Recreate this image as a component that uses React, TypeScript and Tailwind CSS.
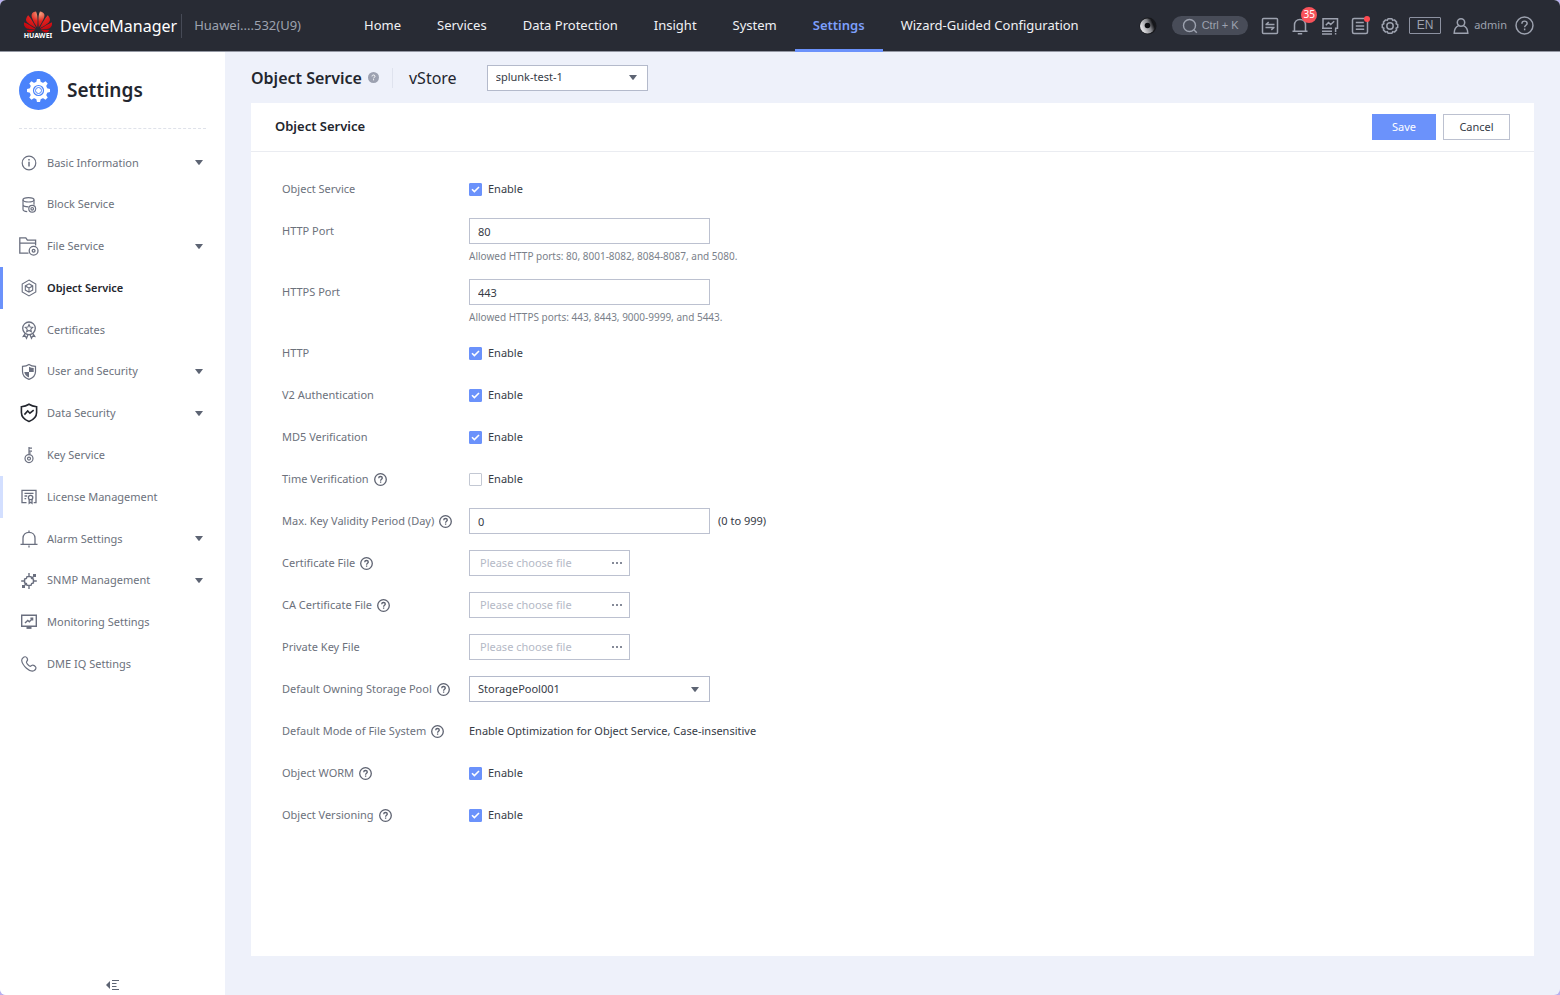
import React, { useId } from 'react'
import { SiHuawei } from 'react-icons/si'

const Svg: React.FC<{ size?: number; width?: number; className?: string; children: React.ReactNode }> = ({
    size = 20,
    width = 1.2,
    className = '',
    children,
}) => (
    <svg
        width={size}
        height={size}
        viewBox={`0 0 ${size} ${size}`}
        fill="none"
        stroke="currentColor"
        strokeWidth={width}
        className={`shrink-0 ${className}`}
        aria-hidden="true"
    >
        {children}
    </svg>
)

/* ---------- sidebar icons ---------- */

const InfoIcon = () => (
    <Svg>
        <circle cx="10" cy="10" r="6.8" />
        <path d="M10 8.8v4.7M10 6v1.4" strokeWidth="1.5" />
    </Svg>
)

const BlockIcon = () => (
    <Svg>
        <ellipse cx="9.5" cy="4.8" rx="5.5" ry="2.2" />
        <path d="M4 4.8v9.4c0 1.3 1.8 2.2 4.2 2.4M15 4.8v5M4 9.6c0 1.3 2.4 2.3 5.500 2.3" />
        <circle cx="13.2" cy="13.8" r="3.4" />
        <circle cx="13.2" cy="13.8" r="1.3" />
    </Svg>
)

const FolderIcon = () => (
    <Svg width={1.3}>
        <path d="M9.5 17.2H.8V1.8h6l1.6 2.4h8.2v5.4M.8 7.2h15.8" />
        <circle cx="14.6" cy="14.8" r="4.4" />
        <circle cx="14.6" cy="14.8" r="1.4" />
    </Svg>
)

const ObjectIcon = () => (
    <Svg width={1.1}>
        <path d="M10 2.1l6.8 3.9v8L10 17.9 3.200 14V6z" />
        <path d="M10 5.800l3.700 2.100v4.200L10 14.200l-3.700-2.100V7.900zM6.300 7.900L10 10l3.700-2.100M10 10v4.200" />
    </Svg>
)

const CertificateIcon = () => (
    <Svg width={1.3}>
        <circle cx="10" cy="8.3" r="6.3" />
        <path d="M10 4.6l1.1 2.4 2.6.3-1.9 1.8.5 2.6L10 10.4l-2.3 1.3.5-2.6-1.900-1.800 2.600-.3z" strokeWidth="1.1" />
        <path d="M6.3 13.4l-2 3 2.2-.2 1 2 1.500-3.400M13.700 13.400l2 3-2.200-.2-1 2-1.500-3.400" />
    </Svg>
)

const ShieldUserIcon = () => (
    <Svg>
        <path d="M10 2.4c2 1.3 4 1.800 6.500 2v5c0 3.900-2.600 6.500-6.500 8-3.900-1.500-6.500-4.100-6.500-8v-5c2.500-.2 4.500-.7 6.500-2z" />
        <path d="M10 4.700c1.500.8 3 1.200 4.700 1.400V10H10zM10 10v5.500c-2.700-1.200-4.400-3-4.700-5.500z" fill="currentColor" stroke="none" />
    </Svg>
)

const ShieldDataIcon = () => (
    <Svg width={1.6} className="text-[#23262e]">
        <path d="M10 1.3c2.3 1.4 4.8 2.1 7.6 2.400v5.800c0 4.200-3 7.200-7.600 9-4.600-1.800-7.600-4.800-7.600-9V3.700c2.800-.3 5.300-1 7.600-2.400z" />
        <path d="M5.400 11.600L8.700 8l2.200 2.200 3.800-3" />
    </Svg>
)

const KeyIcon = () => (
    <Svg>
        <circle cx="10" cy="13.6" r="4" />
        <circle cx="10" cy="13.6" r="1.5" />
        <path d="M10 9.600V2M10 3.200h3M10 6.200h3M10 8h2" />
    </Svg>
)

const LicenseIcon = () => (
    <Svg width={1.3}>
        <path d="M7.500 15.600H3V3.400h14v12.200h-2.300M5.500 6.400h9M5.500 9h2.700M5.500 11.600h1.700" />
        <circle cx="11.600" cy="10.500" r="2.200" />
        <path d="M10.200 12.400v3.800l1.400-.9 1.400.9v-3.800" />
    </Svg>
)

const AlarmIcon = () => (
    <Svg width={1.3}>
        <path d="M1.500 15.300h17M4 15.300V9.200C4 5.600 6.600 3.300 10 3.300s6 2.300 6 5.900v6.100M10 3.300V1.500M10 16.600v2" />
    </Svg>
)

const SnmpIcon = () => (
    <Svg width={1.4}>
        <path d="M8 5.600h4l.6 1.800 1.800.6v4l-1.800.6-.6 1.800H8l-.6-1.800-1.800-.6V8l1.800-.6z" />
        <path d="M10 2v3.600M10 14.400V18M2.200 10h3.400M14.400 10h3.400M12.600 7.400l2.400-2.400M7.400 12.600L5 15" />
        <path d="M14 3h3v3h-3zM3 14h3v3H3z" fill="currentColor" stroke="none" />
    </Svg>
)

const MonitorIcon = () => (
    <Svg width={1.4}>
        <path d="M2.700 3.300h14.600v10.900H2.700z" />
        <path d="M6 11l2.800-2.600 1.500 1.300 2.900-2.900M11.400 6.200h2.200v2.200" />
        <path d="M7.500 15h5v1.900h-5z" fill="currentColor" stroke="none" />
    </Svg>
)

const PhoneIcon = () => (
    <Svg>
        <path d="M4.300 3.400c1.300-1 2.800-.9 3.600.4.800 1.300 1 2.700-.2 3.700-.6.600-.4 1.200.5 2.300s1.900 2.200 2.700 2.500c.9.300 1.300-.8 2.200-1.100 1.300-.4 2.600.4 3.500 1.700.8 1.100.2 2.700-1.400 3.700-1.700 1-4.700.3-7.700-2.400S2.900 8.500 2.700 6.500c-.1-1.300.5-2.300 1.600-3.100z" />
    </Svg>
)

const Caret: React.FC<{ className?: string }> = ({ className = '' }) => (
    <svg width="8" height="5" viewBox="0 0 8 5" fill="currentColor" className={`shrink-0 text-[#5d6473] ${className}`} aria-hidden="true">
        <path d="M0 0h8L4.600 4.600a.8.800 0 0 1-1.200 0z" />
    </svg>
)

const HelpIcon: React.FC<{ size?: number; className?: string }> = ({ size = 13, className = '' }) => (
    <svg
        width={size}
        height={size}
        viewBox="0 0 13 13"
        fill="none"
        stroke="currentColor"
        strokeWidth={size > 13 ? 1 : 1.3}
        className={`shrink-0 ${className}`}
        aria-hidden="true"
    >
        <circle cx="6.5" cy="6.5" r="5.8" />
        <path d="M4.7 5.3c0-1.1.8-1.8 1.800-1.800s1.800.7 1.800 1.600c0 1.200-1.700 1.300-1.700 2.600M6.600 8.600v1.200" />
    </svg>
)

/* ---------- header icons ---------- */

const TransferIcon = () => (
    <Svg size={18} width={1.5}>
        <rect x="1.5" y="1.5" width="15" height="15" rx="1" />
        <path d="M4.500 7.600h9M4.700 7.800l3-2.700M13.500 10.400h-9M13.300 10.200l-3 2.700" />
    </Svg>
)

const BellIcon = () => (
    <Svg size={18} width={1.5}>
        <path d="M1.500 14.300h15M3.500 14V8c0-3.300 2.300-5.500 5.500-5.500s5.500 2.200 5.500 5.500v6M6.800 16.700h4.400" />
    </Svg>
)

const ChartIcon = () => (
    <Svg size={18} width={1.5}>
        <path d="M2 11.200V1.800h14.500v9.400h-2.600M1 11.200h10M4.800 8.200l2.700-2.700 2.200 2 3.500-3.300M1 14.200h10M1 17h10M14.600 12v3M14.600 16v1.500" />
    </Svg>
)

const ListIcon = () => (
    <Svg size={18} width={1.5}>
        <rect x="1.5" y="1.5" width="15" height="15" rx="1.5" />
        <path d="M4.800 5.600h8M4.800 9h8.400M4.800 12.300h8.400" />
    </Svg>
)

const CogIcon = () => (
    <Svg size={18} width={1.5}>
        <path
            d="M7 1.800h4l.7 1.600 1.700-.5 2.200 2.200-.5 1.700 1.600.7v3l-1.600.7.5 1.700-2.200 2.200-1.700-.5-.7 1.600H7l-.7-1.600-1.700.5-2.200-2.200.5-1.700-1.600-.7v-3l1.600-.7-.5-1.700 2.200-2.200 1.700.5z"
            strokeLinejoin="round"
        />
        <circle cx="9" cy="9" r="3.2" />
    </Svg>
)

const UserIcon = () => (
    <Svg size={18} width={1.5}>
        <circle cx="9" cy="5.5" r="3.7" />
        <path d="M6.700 8.600C3.600 9.800 2.200 12.200 2.200 16.200h13.600c0-4-1.400-6.400-4.500-7.600" />
    </Svg>
)

const SearchIcon = () => (
    <Svg size={16} width={1.4}>
        <circle cx="7.5" cy="7.5" r="6" />
        <path d="M11.800 11.800l3 3" />
    </Svg>
)

const StatusRing = () => (
    <svg width="18" height="18" viewBox="0 0 18 18" aria-hidden="true">
        <defs>
            <linearGradient id="ring" x1="0.1" y1="0.8" x2="1" y2="0.4">
                <stop offset="0.1" stopColor="#dddde0" />
                <stop offset="0.6" stopColor="#85868b" />
                <stop offset="0.9" stopColor="#15161a" />
            </linearGradient>
        </defs>
        <circle cx="9" cy="9" r="8.5" fill="#17181c" />
        <circle cx="8.5" cy="9" r="7.5" fill="url(#ring)" />
        <circle cx="8.5" cy="8.5" r="2.8" fill="#0b0c10" />
    </svg>
)

const GearBadge = () => (
    <svg width="39" height="39" viewBox="0 0 39 39" aria-hidden="true">
        <circle cx="19.5" cy="19.5" r="19.5" fill="#4a83fb" />
        {[0, 45, 90, 135, 180, 225, 270, 315].map((a) => (
            <path key={a} d="M17 12l1-4h3l1 4z" fill="#fff" transform={`rotate(${a} 19.5 19.5)`} />
        ))}
        <circle cx="19.5" cy="19.5" r="9" fill="#fff" />
        <circle cx="19.5" cy="19.5" r="5" fill="none" stroke="#4a83fb" strokeWidth="1.2" />
        <circle cx="19.5" cy="19.5" r="3" fill="none" stroke="#4a83fb" strokeWidth="1" />
    </svg>
)

const Logo = () => (
    <div className="flex w-7 flex-col items-center">
        <svg width="0" height="0" className="absolute" aria-hidden="true">
            <defs>
                <radialGradient id="petal" cx="0.55" cy="0.1" r="0.8">
                    <stop offset="0" stopColor="#f5a883" />
                    <stop offset="0.45" stopColor="#e2231f" />
                    <stop offset="1" stopColor="#c4060f" />
                </radialGradient>
            </defs>
        </svg>
        <SiHuawei size={28} fill="url(#petal)" stroke="none" className="-my-1" aria-hidden="true" />
        <span className="text-[7px] leading-[7px] font-bold text-white">HUAWEI</span>
    </div>
)

/* ---------- data ---------- */

const navItems = ['Home', 'Services', 'Data Protection', 'Insight', 'System', 'Settings', 'Wizard-Guided Configuration']

const menu = [
    { label: 'Basic Information', icon: <InfoIcon />, expandable: true },
    { label: 'Block Service', icon: <BlockIcon /> },
    { label: 'File Service', icon: <FolderIcon />, expandable: true },
    { label: 'Object Service', icon: <ObjectIcon />, active: true },
    { label: 'Certificates', icon: <CertificateIcon /> },
    { label: 'User and Security', icon: <ShieldUserIcon />, expandable: true },
    { label: 'Data Security', icon: <ShieldDataIcon />, expandable: true },
    { label: 'Key Service', icon: <KeyIcon /> },
    { label: 'License Management', icon: <LicenseIcon />, hovered: true },
    { label: 'Alarm Settings', icon: <AlarmIcon />, expandable: true },
    { label: 'SNMP Management', icon: <SnmpIcon />, expandable: true },
    { label: 'Monitoring Settings', icon: <MonitorIcon /> },
    { label: 'DME IQ Settings', icon: <PhoneIcon /> },
]

/* ---------- form pieces ---------- */

const Row: React.FC<{ label: string; htmlFor?: string; help?: boolean; hint?: string; children: React.ReactNode }> = ({
    label,
    htmlFor,
    help,
    hint,
    children,
}) => (
    <div className={hint ? 'h-[61px]' : 'h-[42px]'}>
        <div className="flex h-[42px] items-center">
            <div className="flex w-[187px] shrink-0 items-center gap-[5px] text-[#6c717c]">
                {htmlFor ? <label htmlFor={htmlFor}>{label}</label> : <span>{label}</span>}
                {help && <HelpIcon className="text-[#5d6270]" />}
            </div>
            {children}
        </div>
        {hint && <p className="-mt-1 ml-[187px] text-[10px] leading-4 text-[#7a7f8a]">{hint}</p>}
    </div>
)

const CheckRow: React.FC<{ label: string; help?: boolean; defaultChecked?: boolean }> = ({ label, help, defaultChecked = true }) => {
    const id = useId()
    return (
        <Row label={label} help={help}>
            <span className="grid place-items-center">
                <input
                    id={id}
                    type="checkbox"
                    aria-label={label}
                    defaultChecked={defaultChecked}
                    className="peer col-start-1 row-start-1 size-[13px] appearance-none rounded-[1px] border border-[#c3c8d3] bg-white checked:border-[#6b92fb] checked:bg-[#6b92fb]"
                />
                <svg width="9" height="7" viewBox="0 0 9 7" className="pointer-events-none invisible col-start-1 row-start-1 peer-checked:visible" aria-hidden="true">
                    <path d="M1 3.2l2.400 2.400L8 1" fill="none" stroke="#fff" strokeWidth="1.6" />
                </svg>
            </span>
            <label htmlFor={id} className="ml-1.5 text-[#363b46]">
                Enable
            </label>
        </Row>
    )
}

const TextRow: React.FC<{ label: string; value: string; help?: boolean; hint?: string; suffix?: string }> = ({ label, value, help, hint, suffix }) => {
    const id = useId()
    return (
        <Row label={label} htmlFor={id} help={help} hint={hint}>
            <input id={id} type="text" defaultValue={value} className="h-[26px] w-[241px] border border-[#bcc1d0] bg-white px-2 text-[#363b46] outline-none" />
            {suffix && <span className="ml-2 text-[#363b46]">{suffix}</span>}
        </Row>
    )
}

const FileRow: React.FC<{ label: string; help?: boolean }> = ({ label, help }) => {
    const id = useId()
    return (
        <Row label={label} htmlFor={id} help={help}>
            <div className="flex h-[26px] w-[161px] items-center border border-[#bcc1d0] bg-white">
                <input id={id} type="text" readOnly placeholder="Please choose file" className="min-w-0 flex-1 pl-2.5 outline-none placeholder:text-[#b4b9c6]" />
                <button type="button" aria-label={`Browse ${label}`} className="flex h-full w-6 items-center justify-center">
                    <svg width="10" height="2" viewBox="0 0 10 2" fill="#858a98" aria-hidden="true">
                        <path d="M0 0h2v2H0zM4 0h2v2H4zM8 0h2v2H8z" />
                    </svg>
                </button>
            </div>
        </Row>
    )
}

const Select: React.FC<{ id: string; value: string; className: string }> = ({ id, value, className }) => (
    <div className={`grid h-[26px] items-center ${className}`}>
        <select id={id} defaultValue={value} className="col-start-1 row-start-1 h-full w-full appearance-none border border-[#b4bacb] bg-white px-2 text-[#363b46] outline-none">
            <option>{value}</option>
        </select>
        <Caret className="pointer-events-none col-start-1 row-start-1 mr-[11px] justify-self-end" />
    </div>
)

/* ---------- layout ---------- */

const Header = () => (
    <header className="flex h-[52px] items-center border-b border-[#9498a3] bg-[#282b34] pr-[26px] pl-6 text-[#9da2af]">
        <Logo />
        <span className="ml-2 text-[16px] text-white">DeviceManager</span>
        <span className="ml-1 h-6 w-px bg-[#464a56]" />
        <span className="ml-3 text-[13px]">Huawei....532(U9)</span>
        <nav className="ml-[45px] flex h-full text-[13px] whitespace-nowrap">
            {navItems.map((item) => (
                <a
                    key={item}
                    href="#"
                    className={`-mb-px flex items-center border-y-[3px] border-t-transparent px-[18px] ${
                        item === 'Settings' ? 'border-b-[#6b92fb] font-semibold text-[#7d9ffb]' : 'border-b-transparent text-[#f0f1f4]'
                    }`}
                >
                    {item}
                </a>
            ))}
        </nav>
        <div className="ml-auto flex items-center">
            <StatusRing />
            <button type="button" className="ml-[15px] flex h-[19px] w-[76px] items-center justify-center gap-1 rounded-full bg-[#484c58] font-['Liberation_Sans',sans-serif] text-[11px]">
                <SearchIcon />
                <span>Ctrl + K</span>
            </button>
            <div className="ml-[13px] flex gap-3">
                <button type="button" aria-label="Transfers">
                    <TransferIcon />
                </button>
                <button type="button" aria-label="Alarms" className="relative">
                    <BellIcon />
                    <span className="absolute -top-[10px] left-[10px] flex size-4 items-center justify-center rounded-full bg-[#f8525a] text-[10px] text-white">35</span>
                </button>
                <button type="button" aria-label="Monitoring">
                    <ChartIcon />
                </button>
                <button type="button" aria-label="Tasks" className="relative">
                    <ListIcon />
                    <span className="absolute -top-px -right-px size-[6px] rounded-full bg-[#ff4a50]" />
                </button>
                <button type="button" aria-label="Preferences">
                    <CogIcon />
                </button>
            </div>
            <button type="button" className="ml-[10px] h-[17px] w-8 rounded-[1px] border border-[#8d92a1] font-['Liberation_Sans',sans-serif] text-[12px] leading-[15px]">
                EN
            </button>
            <button type="button" className="ml-[11px] flex items-center gap-1 text-[11px]">
                <UserIcon />
                admin
            </button>
            <button type="button" aria-label="Help" className="ml-2">
                <HelpIcon size={19} />
            </button>
        </div>
    </header>
)

const Sidebar = () => (
    <aside className="flex w-[225px] shrink-0 flex-col bg-white">
        <div className="mx-[19px] flex h-[77px] items-center gap-[9px] border-b border-dashed border-[#dfe2ea] text-[19px] font-semibold text-[#23262e]">
            <GearBadge />
            Settings
        </div>
        <nav className="mt-[13px] grid h-[543px] auto-rows-fr text-[11px]">
            {menu.map(({ label, icon, expandable, active, hovered }) => (
                <a
                    key={label}
                    href="#"
                    className={`flex items-center border-l-[3px] pr-[22px] pl-4 ${
                        active ? 'border-[#6b92fb] font-semibold text-[#23262e]' : hovered ? 'border-[#d3dfff] text-[#6c717c]' : 'border-transparent text-[#6c717c]'
                    }`}
                >
                    <span className="text-[#6a6f7f]">{icon}</span>
                    <span className="ml-2 flex-1">{label}</span>
                    {expandable && <Caret />}
                </a>
            ))}
        </nav>
        <button type="button" aria-label="Collapse menu" className="mx-auto mt-auto mb-1 text-[#5d6473]">
            <svg width="14" height="12" viewBox="0 0 14 12" aria-hidden="true">
                <path d="M0 6l4-4v8z" fill="currentColor" />
                <path d="M6 1.500h7M6 4.500h4.500M6 7.500h4.500M6 10.500h7" stroke="currentColor" strokeWidth="1.2" fill="none" />
            </svg>
        </button>
    </aside>
)

export default function App() {
    return (
        <div className="min-h-screen bg-[#b9b0ee] font-['Noto_Sans',sans-serif]">
            <div className="flex min-h-screen flex-col overflow-hidden rounded-md bg-[#eef1fa]">
                <Header />
                <div className="flex flex-1">
                    <Sidebar />
                    <main className="flex min-w-0 flex-1 flex-col px-[26px] pb-[39px] text-[11px]">
                        <div className="flex h-[51px] items-center text-[#23262e]">
                            <h1 className="text-[16px] font-semibold">Object Service</h1>
                            <svg width="11" height="11" viewBox="0 0 11 11" className="ml-1.5" aria-hidden="true">
                                <circle cx="5.5" cy="5.5" r="5.5" fill="#9ca1b0" />
                                <path d="M4 4.400c0-.9.600-1.400 1.500-1.400S7 3.500 7 4.300c0 1-1.400 1-1.400 2.100M5.600 7.200v1.100" fill="none" stroke="#fff" />
                            </svg>
                            <span className="ml-[13px] h-5 w-px bg-[#dfe3ee]" />
                            <label htmlFor="vstore" className="ml-4 text-[16px]">
                                vStore
                            </label>
                            <Select id="vstore" value="splunk-test-1" className="ml-[30px] w-[161px]" />
                        </div>
                        <section className="flex-1 bg-white">
                            <div className="flex h-[49px] items-center border-b border-[#eaecf1] px-6">
                                <h2 className="flex-1 text-[13px] font-semibold text-[#23262e]">Object Service</h2>
                                <button type="button" className="h-[26px] w-16 bg-[#6b92fb] text-white">
                                    Save
                                </button>
                                <button type="button" className="ml-[7px] h-[26px] w-[67px] border border-[#bcc1d0] bg-white text-[#363b46]">
                                    Cancel
                                </button>
                            </div>
                            <form className="px-[31px] pt-4">
                                <CheckRow label="Object Service" />
                                <TextRow label="HTTP Port" value="80" hint="Allowed HTTP ports: 80, 8001-8082, 8084-8087, and 5080." />
                                <TextRow label="HTTPS Port" value="443" hint="Allowed HTTPS ports: 443, 8443, 9000-9999, and 5443." />
                                <CheckRow label="HTTP" />
                                <CheckRow label="V2 Authentication" />
                                <CheckRow label="MD5 Verification" />
                                <CheckRow label="Time Verification" help defaultChecked={false} />
                                <TextRow label="Max. Key Validity Period (Day)" value="0" help suffix="(0 to 999)" />
                                <FileRow label="Certificate File" help />
                                <FileRow label="CA Certificate File" help />
                                <FileRow label="Private Key File" />
                                <Row label="Default Owning Storage Pool" htmlFor="pool" help>
                                    <Select id="pool" value="StoragePool001" className="w-[241px]" />
                                </Row>
                                <Row label="Default Mode of File System" help>
                                    <span className="text-[#363b46]">Enable Optimization for Object Service, Case-insensitive</span>
                                </Row>
                                <CheckRow label="Object WORM" help />
                                <CheckRow label="Object Versioning" help />
                            </form>
                        </section>
                    </main>
                </div>
            </div>
        </div>
    )
}
